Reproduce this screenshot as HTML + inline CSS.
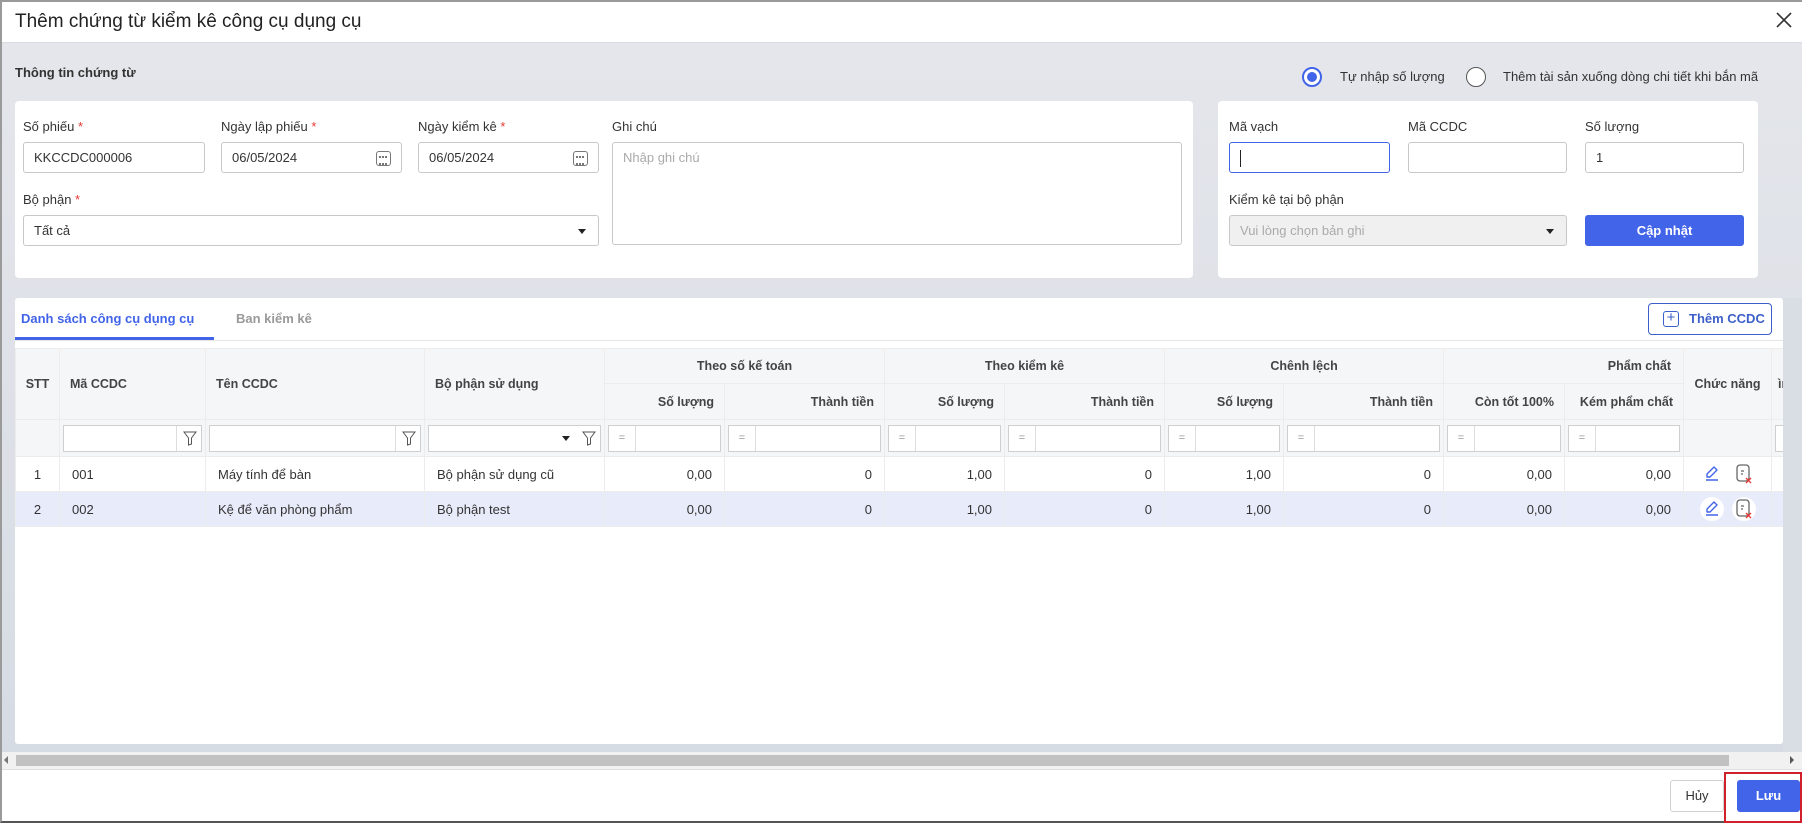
<!DOCTYPE html>
<html><head><meta charset="utf-8"><style>
*{box-sizing:border-box;margin:0;padding:0}
body{width:1802px;height:823px;overflow:hidden;background:#fff;font-family:"Liberation Sans",Arial,sans-serif;font-size:13px;color:#333;position:relative}
.a{position:absolute}
.frame{left:0;top:0;width:1802px;height:823px;border:2px solid #9a9a9a;border-bottom:2px solid #555;border-right:none}
.gray{left:2px;top:42px;width:1800px;height:728px;background:linear-gradient(180deg,#e4e6eb,#d6dbe3);border-top:1px solid #d8dbe0}
.card{background:#fff;border-radius:4px}
.lbl{font-size:13px;color:#333}
.req{color:#e53935}
.inp{border:1px solid #c8c8c8;border-radius:3px;background:#fff;height:31px;font-size:13px;padding:0 10px;line-height:29px;color:#333}
.blue{background:#4264e9;color:#fff;border-radius:3px;text-align:center;font-weight:bold;font-size:13px}
table{border-collapse:collapse;table-layout:fixed;position:absolute;left:15px;top:348px}
td,th{border:1px solid #ececec;font-size:13px;color:#333;overflow:hidden;white-space:nowrap}
th{background:#f5f6f8;font-weight:bold;color:#444;font-size:12.5px}
.h1{height:35px}.h2{height:36px}.fr td{height:37px;background:#f5f6f8;padding:0 3px}
.dr td{height:35px;padding:0 12px}
.num{text-align:right}
.fi{border:1px solid #cfcfcf;background:#fff;height:27px;position:relative}
.eq{position:absolute;left:0;top:0;width:27px;height:25px;border-right:1px solid #ddd;color:#999;font-size:11px;text-align:center;line-height:25px}
.cal{position:absolute;right:10px;top:8px;width:15px;height:15px;border:1.3px solid #777;border-radius:3px}
.cal:before{content:"";position:absolute;left:2px;top:4px;width:8px;height:5px;border-top:2px dotted #777;border-bottom:2px dotted #777}
.caret{position:absolute;width:0;height:0;border-left:4px solid transparent;border-right:4px solid transparent;border-top:5px solid #222}
.ic{display:inline-block;vertical-align:middle}
</style></head><body>
<div class="a frame"></div>
<div class="a" style="left:15px;top:11px;font-size:19px;color:#222">Thêm chứng từ kiểm kê công cụ dụng cụ</div>
<svg class="a" style="left:1775px;top:11px" width="18" height="18" viewBox="0 0 18 18"><path d="M2 2L16 16M16 2L2 16" stroke="#333" stroke-width="1.6"/></svg>
<div class="a gray"></div>
<div class="a" style="left:15px;top:65px;font-weight:bold;font-size:13px;color:#333">Thông tin chứng từ</div>
<div class="a" style="left:1302px;top:67px;width:20px;height:20px;border:2px solid #4264e9;border-radius:50%;background:#fff"><div style="margin:3px;width:10px;height:10px;border-radius:50%;background:#4264e9"></div></div>
<div class="a" style="left:1340px;top:69px;font-size:13px">Tự nhập số lượng</div>
<div class="a" style="left:1466px;top:67px;width:20px;height:20px;border:1.5px solid #555;border-radius:50%;background:#fff"></div>
<div class="a" style="left:1503px;top:69px;font-size:13px">Thêm tài sản xuống dòng chi tiết khi bắn mã</div>

<div class="a card" style="left:15px;top:101px;width:1178px;height:177px"></div>
<div class="a lbl" style="left:23px;top:119px">Số phiếu <span class="req">*</span></div>
<div class="a lbl" style="left:221px;top:119px">Ngày lập phiếu <span class="req">*</span></div>
<div class="a lbl" style="left:418px;top:119px">Ngày kiểm kê <span class="req">*</span></div>
<div class="a lbl" style="left:612px;top:119px">Ghi chú</div>
<div class="a inp" style="left:23px;top:142px;width:182px">KKCCDC000006</div>
<div class="a inp" style="left:221px;top:142px;width:181px">06/05/2024<div class="cal"></div></div>
<div class="a inp" style="left:418px;top:142px;width:181px">06/05/2024<div class="cal"></div></div>
<div class="a inp" style="left:612px;top:142px;width:570px;height:103px;color:#aaa">Nhập ghi chú</div>
<div class="a lbl" style="left:23px;top:192px">Bộ phận <span class="req">*</span></div>
<div class="a inp" style="left:23px;top:215px;width:576px">Tất cả<div class="caret" style="right:12px;top:13px"></div></div>

<div class="a card" style="left:1218px;top:101px;width:540px;height:177px"></div>
<div class="a lbl" style="left:1229px;top:119px">Mã vạch</div>
<div class="a lbl" style="left:1408px;top:119px">Mã CCDC</div>
<div class="a lbl" style="left:1585px;top:119px">Số lượng</div>
<div class="a inp" style="left:1229px;top:142px;width:161px;border-color:#4264e9"><span style="display:inline-block;width:1px;height:17px;background:#222;vertical-align:middle"></span></div>
<div class="a inp" style="left:1408px;top:142px;width:159px"></div>
<div class="a inp" style="left:1585px;top:142px;width:159px">1</div>
<div class="a lbl" style="left:1229px;top:192px">Kiểm kê tại bộ phận</div>
<div class="a inp" style="left:1229px;top:215px;width:338px;background:#f0f0f0;color:#aaa">Vui lòng chọn bản ghi<div class="caret" style="right:12px;top:13px"></div></div>
<div class="a blue" style="left:1585px;top:215px;width:159px;height:31px;line-height:31px">Cập nhật</div>

<div class="a" style="left:15px;top:298px;width:1768px;height:446px;background:#fff;border-radius:3px"></div>
<div class="a" style="left:15px;top:340px;width:1768px;height:1px;background:#e6e6e6"></div>
<div class="a" style="left:21px;top:311px;color:#4264e9;font-weight:bold;font-size:13px">Danh sách công cụ dụng cụ</div>
<div class="a" style="left:15px;top:337px;width:199px;height:3px;background:#4264e9"></div>
<div class="a" style="top:311px;color:#999;font-weight:bold;font-size:13px;left:236px">Ban kiểm kê</div>
<div class="a" style="left:1648px;top:303px;width:124px;height:32px;border:1px solid #3d5fc9;border-radius:4px;color:#3d5fc9;font-weight:bold;font-size:13px;line-height:30px;padding-left:40px">Thêm CCDC
<div class="a" style="left:14px;top:7px;width:16px;height:16px;border:1.5px solid #3d5fc9;border-radius:3px;line-height:12px;text-align:center;font-size:15px;font-weight:normal;padding:0">+</div></div>

<table style="width:1818px">
<colgroup><col style="width:44px"><col style="width:146px"><col style="width:219px"><col style="width:180px"><col style="width:120px"><col style="width:160px"><col style="width:120px"><col style="width:160px"><col style="width:119px"><col style="width:160px"><col style="width:121px"><col style="width:119px"><col style="width:88px"><col style="width:162px"></colgroup>
<tr class="h1"><th rowspan="2">STT</th><th rowspan="2" style="text-align:left;padding-left:10px">Mã CCDC</th><th rowspan="2" style="text-align:left;padding-left:10px">Tên CCDC</th><th rowspan="2" style="text-align:left;padding-left:10px">Bộ phận sử dụng</th><th colspan="2">Theo số kế toán</th><th colspan="2">Theo kiểm kê</th><th colspan="2">Chênh lệch</th><th colspan="2" style="text-align:right;padding-right:12px">Phẩm chất</th><th rowspan="2">Chức năng</th><th rowspan="2" style="text-align:left;padding-left:6px">ìm</th></tr>
<tr class="h2"><th class="num" style="padding-right:10px">Số lượng</th><th class="num" style="padding-right:10px">Thành tiền</th><th class="num" style="padding-right:10px">Số lượng</th><th class="num" style="padding-right:10px">Thành tiền</th><th class="num" style="padding-right:10px">Số lượng</th><th class="num" style="padding-right:10px">Thành tiền</th><th class="num" style="padding-right:10px">Còn tốt 100%</th><th class="num" style="padding-right:10px">Kém phẩm chất</th></tr>
<tr class="fr"><td></td>
<td><div class="fi"><svg class="a" style="right:4px;top:5px" width="14" height="15" viewBox="0 0 14 15"><path d="M1 1H13L8.5 7V13L5.5 14V7Z" fill="none" stroke="#555"/></svg><div class="a" style="right:24px;top:0;width:1px;height:25px;background:#ddd"></div></div></td>
<td><div class="fi"><svg class="a" style="right:4px;top:5px" width="14" height="15" viewBox="0 0 14 15"><path d="M1 1H13L8.5 7V13L5.5 14V7Z" fill="none" stroke="#555"/></svg><div class="a" style="right:24px;top:0;width:1px;height:25px;background:#ddd"></div></div></td>
<td><div class="fi"><div class="caret" style="right:30px;top:10px"></div><svg class="a" style="right:4px;top:5px" width="14" height="15" viewBox="0 0 14 15"><path d="M1 1H13L8.5 7V13L5.5 14V7Z" fill="none" stroke="#555"/></svg></div></td>
<td><div class="fi"><div class="eq">=</div></div></td><td><div class="fi"><div class="eq">=</div></div></td><td><div class="fi"><div class="eq">=</div></div></td><td><div class="fi"><div class="eq">=</div></div></td><td><div class="fi"><div class="eq">=</div></div></td><td><div class="fi"><div class="eq">=</div></div></td><td><div class="fi"><div class="eq">=</div></div></td><td><div class="fi"><div class="eq">=</div></div></td><td></td><td><div class="fi"></div></td></tr>
<tr class="dr"><td style="text-align:center;padding:0">1</td><td>001</td><td>Máy tính để bàn</td><td>Bộ phận sử dụng cũ</td><td class="num">0,00</td><td class="num">0</td><td class="num">1,00</td><td class="num">0</td><td class="num">1,00</td><td class="num">0</td><td class="num">0,00</td><td class="num">0,00</td><td style="padding:0 0 0 16px"><span class="ic" style="width:24px;height:24px;text-align:center"><svg width="18" height="18" viewBox="0 0 18 18" style="margin-top:3px"><path d="M3 15L15 15M4 12L4 9L11 2L14 5L7 12Z" fill="none" stroke="#4264e9" stroke-width="1.4" stroke-linejoin="round"/></svg></span><span class="ic" style="width:24px;height:24px;margin-left:8px"><svg width="24" height="24" viewBox="0 0 24 24"><rect x="5" y="3" width="12" height="16" rx="3" fill="none" stroke="#666" stroke-width="1.3"/><path d="M9 9h3M9 12h2" stroke="#666" stroke-width="1.2"/><path d="M14 16l5 5M19 16l-5 5" stroke="#e53935" stroke-width="1.3"/></svg></span></td><td></td></tr>
<tr class="dr" style="background:#e8ebfa"><td style="text-align:center;padding:0">2</td><td>002</td><td>Kệ để văn phòng phẩm</td><td>Bộ phận test</td><td class="num">0,00</td><td class="num">0</td><td class="num">1,00</td><td class="num">0</td><td class="num">1,00</td><td class="num">0</td><td class="num">0,00</td><td class="num">0,00</td><td style="padding:0 0 0 16px"><span class="ic" style="width:24px;height:24px;border-radius:50%;background:#fff;text-align:center"><svg width="18" height="18" viewBox="0 0 18 18" style="margin-top:3px"><path d="M3 15L15 15M4 12L4 9L11 2L14 5L7 12Z" fill="none" stroke="#4264e9" stroke-width="1.4" stroke-linejoin="round"/></svg></span><span class="ic" style="width:24px;height:24px;margin-left:8px;border-radius:50%;background:#fff"><svg width="24" height="24" viewBox="0 0 24 24"><rect x="5" y="3" width="12" height="16" rx="3" fill="none" stroke="#666" stroke-width="1.3"/><path d="M9 9h3M9 12h2" stroke="#666" stroke-width="1.2"/><path d="M14 16l5 5M19 16l-5 5" stroke="#e53935" stroke-width="1.3"/></svg></span></td><td></td></tr>
</table>
<div class="a" style="left:1783px;top:298px;width:19px;height:472px;background:#d9dde4"></div>

<div class="a" style="left:2px;top:752px;width:1800px;height:17px;background:#f1f1f1"></div>
<div class="a" style="left:16px;top:755px;width:1713px;height:11px;background:#c1c1c1"></div>
<div class="caret" style="position:absolute;left:4px;top:756px;border:none;border-top:4px solid transparent;border-bottom:4px solid transparent;border-right:4px solid #777"></div>
<div class="caret" style="position:absolute;left:1790px;top:756px;border:none;border-top:4px solid transparent;border-bottom:4px solid transparent;border-left:4px solid #555"></div>
<div class="a" style="left:2px;top:769px;width:1800px;height:1px;background:#e0e0e0"></div>

<div class="a" style="left:1670px;top:780px;width:54px;height:32px;border:1px solid #d0d0d0;border-radius:3px;text-align:center;line-height:30px;font-size:13px">Hủy</div>
<div class="a blue" style="left:1737px;top:780px;width:63px;height:32px;line-height:32px">Lưu</div>
<div class="a" style="left:1724px;top:772px;width:78px;height:51px;border:2px solid #d0202a"></div>
</body></html>
